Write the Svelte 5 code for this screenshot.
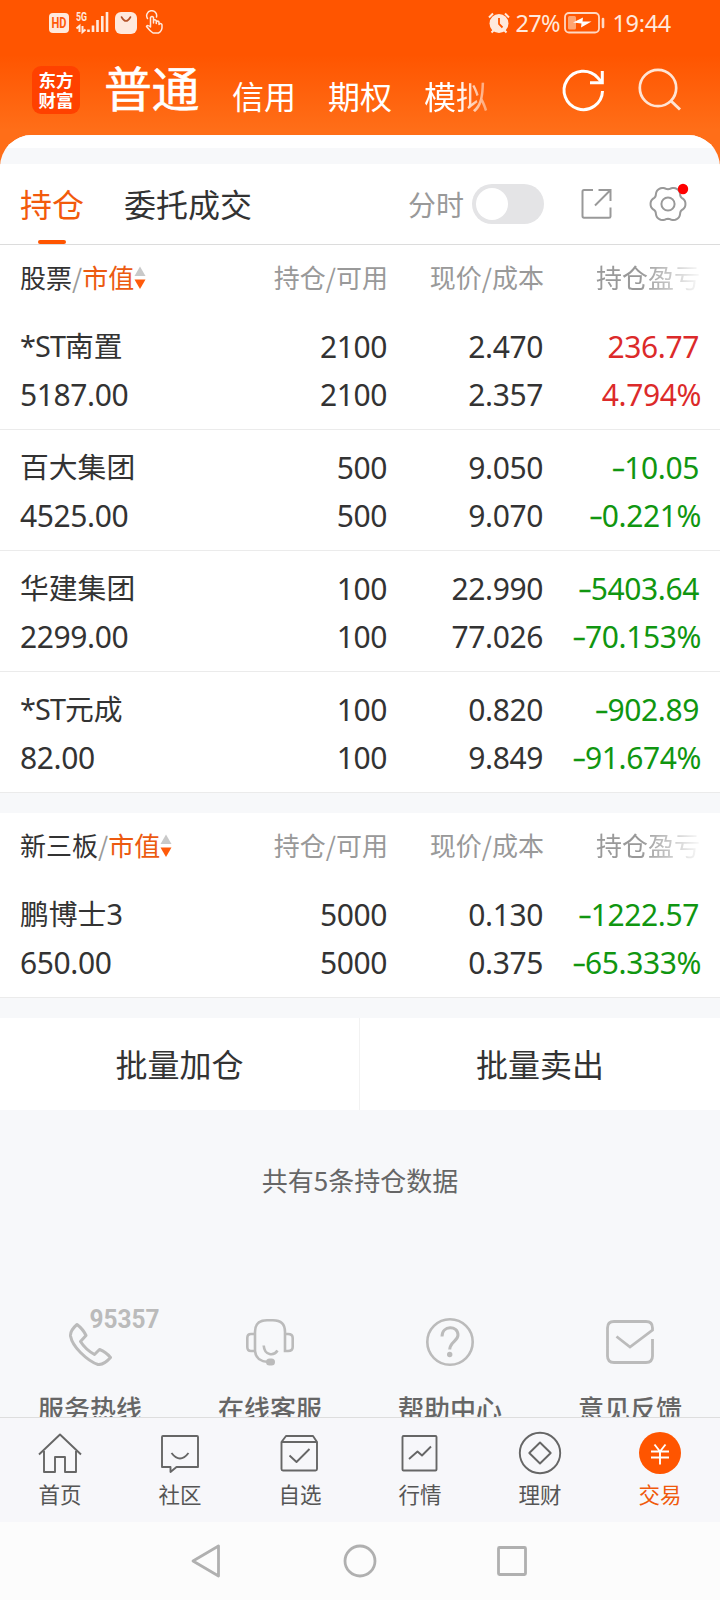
<script>
  const sections = [
    {
      title: '股票',
      rows: [
        ['*ST南置', '5187.00', '2100', '2100', '2.470', '2.357', '236.77', '4.794%', 'up'],
        ['百大集团', '4525.00', '500', '500', '9.050', '9.070', '-10.05', '-0.221%', 'down'],
        ['华建集团', '2299.00', '100', '100', '22.990', '77.026', '-5403.64', '-70.153%', 'down'],
        ['*ST元成', '82.00', '100', '100', '0.820', '9.849', '-902.89', '-91.674%', 'down']
      ]
    },
    {
      title: '新三板',
      rows: [['鹏博士3', '650.00', '5000', '5000', '0.130', '0.375', '-1222.57', '-65.333%', 'down']]
    }
  ];

  // Six-lobed outline of the settings icon.
  const gear =
    'M' +
    Array.from({ length: 72 }, (_, i) => {
      const a = (i * Math.PI) / 36;
      const r = 16.3 + 1.4 * Math.cos(6 * a) - 0.25 * Math.cos(12 * a);
      return `${(20 + r * Math.cos(a)).toFixed(2)} ${(20 + r * Math.sin(a)).toFixed(2)}`;
    }).join('L') +
    'Z';
</script>

<div class="app">
  <div class="status">
    <svg width="118" height="26" viewBox="48 10 118 26">
      <rect x="49" y="13" width="20" height="20" rx="4" fill="#ffe9dd" />
      <text x="59" y="28" class="hd" text-anchor="middle" textLength="15" lengthAdjust="spacingAndGlyphs">HD</text>
      <text x="76" y="21.3" class="net" textLength="11" lengthAdjust="spacingAndGlyphs">5G</text>
      <g stroke="#ffe9dd" fill="none">
        <path d="M76.500 28.500 79.500 26V32M82.500 26V32L85.500 29.500" stroke-width="2" />
        <path d="M88.500 29.500V32M93 25.500V32M97.500 20V32M102.300 16V32M107 12V32" stroke-width="2.600" />
      </g>
      <rect x="115" y="12" width="22" height="22" rx="6" fill="#ffe9dd" />
      <path d="M121.500 17Q126 25 130.500 17" fill="none" stroke="#b5532a" stroke-width="1.600" stroke-linecap="round" />
      <g fill="none" stroke="#ffe9dd" stroke-width="1.500" stroke-linejoin="round" stroke-linecap="round">
        <path d="M147.500 18.500A5 5 0 1 1 156.500 17" />
        <path d="M150.500 27V17.500Q152 15.500 153.500 17.500V23V20.500Q155 19 156.300 20.800V23.500V21.500Q158 20.500 159 22V24.500Q161.500 22.500 162 25Q162.600 31 158.500 33H153Q150 31 146.500 26.500Q147.500 24.500 150.500 27" />
      </g>
    </svg>
    <div class="status-right">
      <svg width="24" height="24" viewBox="487.500 11 24 24">
        <circle cx="499.500" cy="23.500" r="9.500" fill="#ffe9dd" />
        <path d="M499.500 18V24L503 27.500" fill="none" stroke="#ff5500" stroke-width="1.800" />
        <path d="M489.500 17.500 493.500 13.500M509.500 17.500 505.500 13.500M492 32.500 494 30.500M507 32.500 505 30.500" stroke="#ffe9dd" stroke-width="2" />
      </svg>
      <span class="pct">27%</span>
      <svg width="42" height="24" viewBox="563.500 12 42 24">
        <rect x="565.500" y="14" width="34" height="19.500" rx="4" fill="none" stroke="#ffd9c4" stroke-width="1.800" />
        <rect x="568.500" y="17" width="8" height="13.500" rx="1.500" fill="#ffa572" />
        <path d="M573.500 23.500 583.500 18.500 583 22.500H592L581.500 28.500 582 24.500Z" fill="#fff" />
        <path d="M603.500 20V28" stroke="#ffd9c4" stroke-width="2.600" stroke-linecap="round" />
      </svg>
      <span class="time">19:44</span>
    </div>
  </div>

  <header>
    <div class="logo"><span>东方</span><span>财富</span></div>
    <nav>
      <b>普通</b><span>信用</span><span>期权</span><span class="fade-tab">模拟</span>
    </nav>
    <svg class="actions" width="126" height="48" viewBox="560 66 126 48" fill="none">
      <path d="M602.500 91A19.200 19.200 0 1 1 597.500 77.500L602 82.500" stroke="#fff" stroke-width="3" />
      <path d="M602.300 71V82.700H590" stroke="#fff" stroke-width="3" />
      <circle cx="658" cy="88" r="18.200" stroke="#ffe4d4" stroke-width="2.700" />
      <path d="M670.500 100.500 680 109.500" stroke="#ffe4d4" stroke-width="3" />
    </svg>
  </header>

  <main>
    <div class="strip"></div>
    <div class="tabs">
      <div class="tab on">持仓</div>
      <div class="tab">委托成交</div>
      <span class="mode">分时</span>
      <div class="toggle"><i></i></div>
      <svg class="export" width="34" height="34" viewBox="580 187 34 34" fill="none" stroke="#999" stroke-width="2">
        <path d="M593 190H584Q582.500 190 582.500 191.500V216Q582.500 217.800 584 217.800H609Q610.500 217.800 610.500 216.500V207.500M598.500 190H610.500V201M610 190.500 595 205.500" />
      </svg>
      <svg width="44" height="44" viewBox="-2 -2 44 44" fill="none" stroke="#999" stroke-width="2">
        <path d={gear} />
        <circle cx="20" cy="20" r="6.600" />
        <circle cx="35" cy="5" r="5.200" fill="#f00" stroke="none" />
      </svg>
    </div>

    {#each sections as s}
      <section>
        <div class="grid head">
          <div class="name">
            <span class="dark">{s.title}</span><span>/</span><span class="hot">市值</span><svg width="12" height="24" viewBox="0 0 12 24">
              <path d="M0.500 10 6 0.500 11.500 10Z" fill="#c9c9c9" /><path d="M0.500 13.500H11.500L6 23Z" fill="#ff5a0a" />
            </svg>
          </div>
          <div>持仓/可用</div>
          <div>现价/成本</div>
          <div class="fade-col">持仓盈亏</div>
        </div>
        {#each s.rows as r}
          <div class="grid row">
            <div class="name">
              <span class="stock">{#if r[0].startsWith('*ST')}<em>*ST</em>{r[0].slice(3)}{:else}{r[0]}{/if}</span>
              <span>{r[1]}</span>
            </div>
            <div><span>{r[2]}</span><span>{r[3]}</span></div>
            <div><span>{r[4]}</span><span>{r[5]}</span></div>
            <div class={r[8]}>
              {#each [r[6], r[7]] as v}
                <span class:percent={v.endsWith('%')}>{#if v[0] === '-'}<i class="minus">–</i>{v.slice(1)}{:else}{v}{/if}</span>
              {/each}
            </div>
          </div>
        {/each}
      </section>
    {/each}

    <div class="batch"><button>批量加仓</button><button>批量卖出</button></div>
    <p class="total">共有5条持仓数据</p>

    <div class="services">
      <div>
        <svg width="144" height="60" viewBox="18 1306 144 60" fill="none" stroke="#bbb" stroke-width="3" stroke-linejoin="round">
          <path d="M77 1324.500Q70 1330.500 70.500 1336Q72 1344 80.500 1352.500Q90 1362 98 1364.500Q104 1365 110.500 1357.500Q106 1352 99.500 1349.500L94.500 1354.500Q85.500 1349.500 80.500 1341.500L86 1335.500Q83 1329 77 1324.500Z" />
          <text x="89.500" y="1328" class="hotline" textLength="70" lengthAdjust="spacingAndGlyphs">95357</text>
        </svg>
        <span>服务热线</span>
      </div>
      <div>
        <svg width="60" height="60" viewBox="240 1306 60 60" fill="none" stroke="#bbb" stroke-width="2.600">
          <path d="M255 1351V1332Q255 1320.300 267 1320.300H273Q285 1320.300 285 1332V1351H288Q292.700 1351 292.700 1347V1338Q292.700 1334 288 1334H285M255 1334H251Q247.300 1334 247.300 1338V1347Q247.300 1351 251 1351H255Q256 1361.500 268 1362" />
          <path d="M263.700 1345.500C264.500 1356 274 1356 277.500 1350.500" />
          <rect x="266" y="1358.500" width="9" height="7" rx="3.500" fill="#bbb" stroke="none" />
        </svg>
        <span>在线客服</span>
      </div>
      <div>
        <svg width="60" height="60" viewBox="420 1306 60 60" fill="none" stroke="#bbb" stroke-width="2.600">
          <circle cx="450" cy="1342" r="22.700" />
          <path d="M442 1336.500C442 1325 458 1325 458 1335C458 1341 450 1342 449.700 1349.500" stroke-width="3" />
          <circle cx="449.700" cy="1354.500" r="2.700" fill="#bbb" stroke="none" />
        </svg>
        <span>帮助中心</span>
      </div>
      <div>
        <svg width="60" height="60" viewBox="600 1306 60 60" fill="none" stroke="#bbb" stroke-width="2.800">
          <path d="M616.500 1336.500 630 1347 652.500 1330V1328Q652.500 1321.500 646 1321.500H614Q607.500 1321.500 607.500 1328V1356Q607.500 1362.500 614 1362.500H646Q652.500 1362.500 652.500 1356V1339" />
        </svg>
        <span>意见反馈</span>
      </div>
    </div>
  </main>

  <footer>
    <div>
      <svg width="44" height="44" viewBox="38 1431 44 44"><path d="M39 1454.500 60 1434.500 81 1454.500M44 1451V1472H55V1457H65V1472H76V1451" /></svg>
      <span>首页</span>
    </div>
    <div>
      <svg width="44" height="44" viewBox="158 1431 44 44"><path d="M163 1436H197Q198 1436 198 1437V1467H176.500L170.500 1472V1467H162V1437Q162 1436 163 1436ZM171.500 1453Q180 1464 188.500 1453" /></svg>
      <span>社区</span>
    </div>
    <div>
      <svg width="44" height="44" viewBox="278.500 1431 44 44"><path d="M282 1442 286.500 1436H313.500L317.500 1442V1469Q317.500 1470.500 316 1470.500H283.500Q282 1470.500 282 1469ZM282 1442H317.500M290 1455.500 297 1462 310 1449" /></svg>
      <span>自选</span>
    </div>
    <div>
      <svg width="44" height="44" viewBox="398.500 1431 44 44"><rect x="403" y="1436" width="34" height="34.500" rx="1" /><path d="M409.500 1459 418 1451.500 422.500 1455.500 431.500 1446.500" /></svg>
      <span>行情</span>
    </div>
    <div>
      <svg width="44" height="44" viewBox="518 1431 44 44"><circle cx="540" cy="1453" r="20.200" /><path d="M540 1442.500 550.700 1453 540 1463.500 529.300 1453Z" /></svg>
      <span>理财</span>
    </div>
    <div class="active">
      <svg width="44" height="44" viewBox="638 1431 44 44"><circle cx="660" cy="1453" r="21" fill="#ff5500" stroke="none" /><path d="M654.500 1444.500 660 1451.500 665.500 1444.500M651 1451.500H669M651 1457.500H669M660 1451.500V1464.500" stroke="#fff" /></svg>
      <span>交易</span>
    </div>
  </footer>

  <div class="sysbar">
    <svg width="340" height="40" viewBox="190 1541 340 40" fill="none" stroke="#b0b0b0" stroke-width="2.800" stroke-linejoin="round">
      <path d="M218.500 1546V1576L193 1561Z" />
      <circle cx="360" cy="1561" r="15" />
      <rect x="498.500" y="1547.500" width="27" height="27" rx="1" />
    </svg>
  </div>
</div>

<style>
  :global(body) { margin: 0; background: #fff; }
  .app {
    width: 720px; height: 1600px; overflow: hidden;
    display: flex; flex-direction: column;
    background: linear-gradient(#ff5500 0 55px, #ff6e18 130px, #ff6e18 170px, #f7f8fa 170px);
    font-family: 'Noto Sans', 'Noto Sans CJK SC', sans-serif;
    color: #333;
  }
  svg { display: block; flex: none; }
  .status {
    height: 46px; padding: 0 48px; display: flex; align-items: center; justify-content: space-between;
    color: #ffe9dd; font-size: 23.500px;
  }
  .status-right { display: flex; align-items: center; line-height: 46px; }
  .pct { margin-left: 4px; width: 48px; letter-spacing: -0.600px; }
  .time { margin-left: 7px; margin-right: 1px; letter-spacing: -0.300px; }
  .hd { font: 700 15px Roboto, sans-serif; fill: #ff5a0a; }
  .net { font: 700 12.500px Roboto, sans-serif; fill: #ffe9dd; }
  header { height: 89px; flex: none; display: flex; align-items: flex-start; padding: 0 34px 0 32px; color: #fff; }
  .logo {
    width: 48px; height: 41px; padding: 4px 0 3px; margin-top: 20px; border-radius: 9px; background: #ff4100;
    display: flex; flex-direction: column; align-items: center;
    font: 700 17.500px/20px 'Noto Sans CJK SC', sans-serif;
  }
  nav { flex: 1; display: flex; margin-left: 25px; font-family: 'Noto Sans CJK SC', sans-serif; }
  nav b { font-size: 48px; font-weight: 400; letter-spacing: -0.500px; line-height: 80px; -webkit-text-stroke: 0.500px #fff; position: relative; left: -1px; }
  nav span { font-size: 32px; margin-left: 32px; line-height: 98px; }
  .fade-tab { width: 64px; -webkit-mask-image: linear-gradient(90deg, #000 55%, rgba(0, 0, 0, 0.4)); mask-image: linear-gradient(90deg, #000 55%, rgba(0, 0, 0, 0.4)); }
  .actions { margin-top: 20px; }
  main { height: 1282px; flex: none; overflow: hidden; border-radius: 32px 32px 0 0; background: #f7f8fa; }
  .strip { height: 16px; border-top: 13px solid #fff; }
  .tabs {
    height: 80px; border-bottom: 1px solid #dcdcdc; background: #fff;
    display: flex; align-items: center; padding: 0 30px 0 20px;
    font: 32px/80px 'Noto Sans CJK SC', sans-serif;
  }
  .tab { height: 80px; margin-right: 40px; line-height: 78px; }
  .tab.on { color: #f25a0c; position: relative; }
  .tab.on::after { content: ''; position: absolute; left: 18px; bottom: 0; width: 28px; height: 4px; border-radius: 2px; background: #ff5500; }
  .mode { margin-left: auto; font-size: 28px; color: #999; }
  .toggle { width: 64px; height: 32px; padding: 4px; margin-left: 8px; border-radius: 20px; background: #e4e4e6; }
  .toggle i { display: block; width: 32px; height: 32px; border-radius: 50%; background: #fff; }
  .export { margin: 0 32px 0 36px; }
  section { margin-bottom: 20px; background: #fff; }
  .grid { display: grid; grid-template-columns: 212px 156px 156px 156px; padding: 0 20px; text-align: right; }
  .name { text-align: left; }
  .head { height: 64px; line-height: 63px; font-size: 26px; font-family: 'Noto Sans CJK SC', sans-serif; color: #999; }
  .head .name { display: flex; align-items: flex-start; }
  .head svg { margin-top: 21px; }
  .dark { color: #333; }
  .hot { color: #ec5a10; }
  .fade-col { -webkit-mask-image: linear-gradient(90deg, #000 62%, rgba(0, 0, 0, 0.1) 98%); mask-image: linear-gradient(90deg, #000 62%, rgba(0, 0, 0, 0.1) 98%); }
  .row { height: 120px; border-bottom: 1px solid #ebebeb; font-size: 30px; line-height: 48px; letter-spacing: -0.400px; }
  .row > div { padding: 14px 1px 0 0; }
  .row span { display: block; height: 48px; }
  .row .stock { font-size: 28.800px; line-height: 46px; letter-spacing: 0; }
  em { font-style: normal; letter-spacing: -0.900px; }
  .row .percent { margin-right: -2px; }
  .minus { font-style: normal; font-size: 25px; line-height: 1; position: relative; top: -2.500px; -webkit-text-stroke: 0.400px currentColor; }
  .up { color: #dc2a2a; }
  .down { color: #109610; }
  .batch { height: 92px; display: grid; grid-template-columns: 359px 361px; background: #fff; }
  button {
    border: 0; padding: 0; background: none; color: #333;
    font: 32px/88px 'Noto Sans CJK SC', sans-serif; height: 90px;
  }
  button + button { height: 92px; padding-bottom: 2px; border-left: 1px solid #f2f2f2; }
  .total { margin: 51px 0 0; text-align: center; font: 26px/38px 'Noto Sans CJK SC', sans-serif; color: #666; }
  .services { margin-top: 107px; display: grid; grid-template-columns: repeat(4, 180px); }
  .services div { display: flex; flex-direction: column; align-items: center; }
  .services span { margin-top: 22px; font: 500 26px/40px 'Noto Sans CJK SC', sans-serif; color: #666; }
  .hotline { font: 700 26px Roboto, sans-serif; fill: #bbb; stroke: none; }
  footer {
    height: 104px; flex: none; border-top: 1px solid #dedede; background: #f7f7fa;
    display: grid; grid-template-columns: repeat(6, 120px);
  }
  footer div { display: flex; flex-direction: column; align-items: center; padding-top: 13px; }
  footer svg { fill: none; stroke: #666; stroke-width: 1.900px; stroke-linejoin: round; }
  footer span { margin-top: 3px; font: 21.500px/32px 'Noto Sans CJK SC', sans-serif; color: #555; }
  footer .active span { color: #f05a0c; }
  .sysbar { flex: 1; display: flex; justify-content: center; align-items: center; background: #fcfcfc; }
</style>
